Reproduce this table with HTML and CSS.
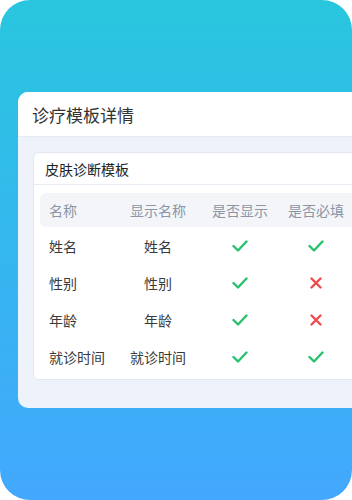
FILE: index.html
```html
<!DOCTYPE html>
<html lang="zh">
<head>
<meta charset="utf-8">
<link rel="stylesheet" href="styles.css">
</head>
<body>
<div class="bg">
  <div class="panel">
    <div class="panel-head">诊疗模板详情</div>
    <div class="panel-body">
      <div class="card">
        <div class="card-head">皮肤诊断模板</div>
        <div class="table">
          <div class="row thead">
            <div class="c1">名称</div><div class="c2">显示名称</div><div class="c3">是否显示</div><div class="c4">是否必填</div>
          </div>
          <div class="row">
            <div class="c1">姓名</div><div class="c2">姓名</div>
            <div class="c3"><svg class="ok" viewBox="0 0 16 12"><path d="M1.5 6 L6 10.5 L14.5 1.5"/></svg></div>
            <div class="c4"><svg class="ok" viewBox="0 0 16 12"><path d="M1.5 6 L6 10.5 L14.5 1.5"/></svg></div>
          </div>
          <div class="row">
            <div class="c1">性别</div><div class="c2">性别</div>
            <div class="c3"><svg class="ok" viewBox="0 0 16 12"><path d="M1.5 6 L6 10.5 L14.5 1.5"/></svg></div>
            <div class="c4"><svg class="no" viewBox="0 0 12 12"><path d="M1.5 1.5 L10.5 10.5 M10.5 1.5 L1.5 10.5"/></svg></div>
          </div>
          <div class="row">
            <div class="c1">年龄</div><div class="c2">年龄</div>
            <div class="c3"><svg class="ok" viewBox="0 0 16 12"><path d="M1.5 6 L6 10.5 L14.5 1.5"/></svg></div>
            <div class="c4"><svg class="no" viewBox="0 0 12 12"><path d="M1.5 1.5 L10.5 10.5 M10.5 1.5 L1.5 10.5"/></svg></div>
          </div>
          <div class="row">
            <div class="c1">就诊时间</div><div class="c2">就诊时间</div>
            <div class="c3"><svg class="ok" viewBox="0 0 16 12"><path d="M1.5 6 L6 10.5 L14.5 1.5"/></svg></div>
            <div class="c4"><svg class="ok" viewBox="0 0 16 12"><path d="M1.5 6 L6 10.5 L14.5 1.5"/></svg></div>
          </div>
        </div>
      </div>
    </div>
  </div>
</div>
</body>
</html>
```
FILE: styles.css
```css
html, body { margin: 0; padding: 0; background: #ffffff; }
body { font-family: "Noto Sans CJK SC", "Noto Sans", sans-serif; }
.bg {
  width: 352px;
  height: 500px;
  border-radius: 30px;
  background: linear-gradient(180deg, #29c6de 0%, #36b5f0 55%, #43a8fe 100%);
  overflow: hidden;
  padding-top: 92px;
  box-sizing: border-box;
}
.panel {
  margin-left: 18px;
  width: 380px;
  border-radius: 10px;
  overflow: hidden;
  background: #eef3fb;
}
.panel-head {
  height: 45px;
  background: #ffffff;
  padding-left: 14px;
  display: flex;
  align-items: center;
  font-size: 17px;
  color: #333333;
  border-bottom: 1px solid #e6ebf3;
  box-sizing: border-box;
}
.panel-body {
  padding: 15px 0 28px 15px;
}
.card {
  background: #ffffff;
  border: 1px solid #e3e8f0;
  border-radius: 6px;
  padding-bottom: 4px;
}
.card-head {
  height: 31px;
  padding-left: 11px;
  display: flex;
  align-items: center;
  font-size: 14px;
  color: #222222;
  border-bottom: 1px solid #e6eaf1;
}
.table {
  padding: 8px 0 0 6px;
}
.row {
  display: grid;
  grid-template-columns: 78px 80px 84px 68px;
  height: 37px;
  align-items: center;
  font-size: 14px;
  color: #3a3a3a;
}
.thead {
  height: 34px;
  background: #f3f5f9;
  border-radius: 6px;
  color: #8b95a7;
}
.c1 { padding-left: 9px; }
.c2, .c3, .c4 { display: flex; justify-content: center; }
.ok, .no { display: block; fill: none; stroke-linecap: round; stroke-linejoin: round; }
.ok { width: 16px; height: 12px; stroke: #27c06c; stroke-width: 2.4; }
.no { width: 12px; height: 12px; stroke: #f24b4b; stroke-width: 2.4; }
```
